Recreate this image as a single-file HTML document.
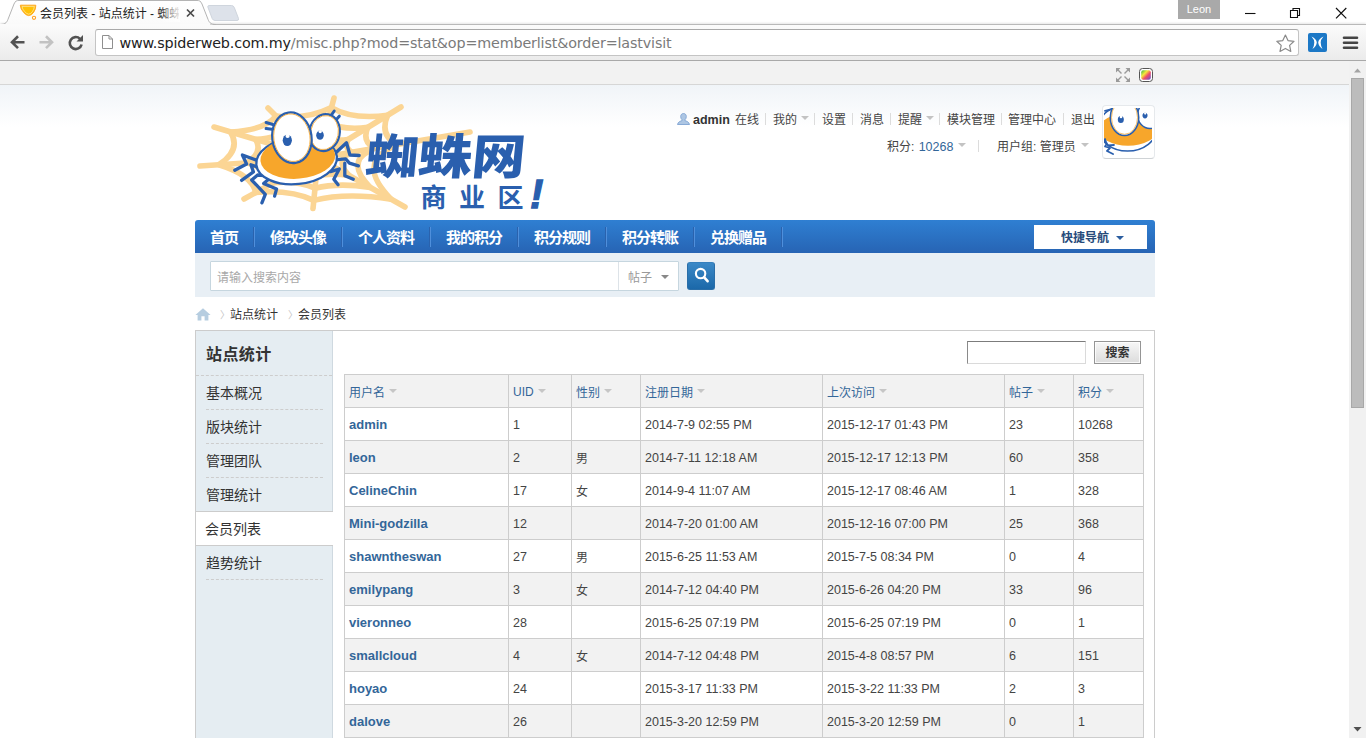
<!DOCTYPE html>
<html lang="zh-CN">
<head>
<meta charset="utf-8">
<title>会员列表 - 站点统计 - 蜘蛛网</title>
<style>
*{box-sizing:border-box;margin:0;padding:0}
html,body{width:1366px;height:738px;overflow:hidden;background:#fff}
body{font-family:"Liberation Sans","Noto Sans CJK SC",sans-serif;font-size:12px;color:#444;position:relative}
.abs{position:absolute}
/* ---------- browser chrome ---------- */
#chrome{position:absolute;left:0;top:0;width:1366px;height:85px;background:#fff;z-index:10}
#toolbar{position:absolute;left:0;top:24px;width:1366px;height:36px;background:linear-gradient(#fbfbfb,#ebebeb);border-top:1px solid #b9b9b9;box-shadow:0 -1px 2px rgba(0,0,0,0.10)}
#tbline{position:absolute;left:0;top:60px;width:1366px;height:1px;background:#a9a9a9}
#extbar{position:absolute;left:0;top:61px;width:1349px;height:24px;background:#f2f2f2;border-bottom:1px solid #d6d6d6}
#urlbox{position:absolute;left:95px;top:29px;width:1204px;height:27px;background:#fff;border:1px solid #c4c4c4;border-top-color:#a9a9a9;border-radius:3px}
#url{position:absolute;left:119.5px;top:33px;font-family:"DejaVu Sans","Liberation Sans",sans-serif;font-size:14.3px;line-height:20px;color:#222;white-space:nowrap;letter-spacing:-0.14px}
#url span{color:#7a7a7a}
#tabtitle{position:absolute;left:40px;top:4.5px;font-size:12px;line-height:18px;color:#222;font-family:"Liberation Sans","Noto Sans CJK SC",sans-serif;white-space:nowrap;width:139px;overflow:hidden}
#tfade{position:absolute;left:160px;top:4px;width:20px;height:18px;background:linear-gradient(90deg,rgba(254,254,254,0),rgba(254,254,254,0.95))}
#leon{position:absolute;left:1178px;top:0;width:42px;height:19px;background:#a9a9a9;color:#fff;font-size:11px;line-height:19px;text-align:center;font-family:"Liberation Sans",sans-serif}
/* ---------- scrollbar ---------- */
#sb{position:absolute;left:1349px;top:61px;width:17px;height:677px;background:#f1f1f1;z-index:11}
#sbthumb{position:absolute;left:2px;top:17px;width:13px;height:330px;background:#bcbcbc;border:1px solid #a8a8a8}
/* ---------- page ---------- */
#page{position:absolute;left:0;top:85px;width:1349px;height:653px;background:linear-gradient(#f0f4f8 0,#fff 42px,#fff 100%);overflow:hidden}
#wrap{position:absolute;left:195px;top:0;width:960px;height:653px}

/* header */
#um{position:absolute;left:0;top:0;width:960px;height:120px;font-size:12px;line-height:28px;color:#444;white-space:nowrap}
#um span{position:absolute}
#um .r1{top:21px}
#um .r2{top:48px}
#um .pipe{width:1px;height:12px;background:#dcdcdc;margin-top:7px;overflow:hidden}
#um .pipe.r2{margin-top:7px}
#um .arr{width:0;height:0;border-left:4px solid transparent;border-right:4px solid transparent;border-top:4px solid #c3c3c3;margin-top:10px}
#um b{color:#333;font-weight:bold;font-size:12.5px}
#avt{position:absolute;left:907px;top:20px;width:53px;height:54px;background:#fff;border-radius:4px;border:1px solid #e6e9ec;border-bottom-color:#cfd3d6;overflow:hidden}
#avt svg{position:absolute;left:1px;top:2px}
/* nav */
#nv{position:absolute;left:0;top:135px;width:960px;height:33px;background:linear-gradient(#2f7fd2,#2a6fc0 60%,#2764b4);border-radius:3px 3px 0 0;font-family:"Liberation Sans","Noto Sans CJK SC",serif;font-weight:700;font-size:15px;letter-spacing:-1px;line-height:35px;color:#fff;white-space:nowrap}
#nv a{position:absolute;top:0;height:33px;padding-left:15px;color:#fff}
#nv a i{position:absolute;right:0;top:7px;width:2px;height:20px;background:linear-gradient(90deg,#2a62ad 50%,#4f8fdb 50%)}
#qm{position:absolute;left:839px;top:5px;width:113px;height:24px;background:#fff;color:#264a7a;font-size:12px;letter-spacing:0;line-height:27px;text-align:left;padding-left:27px;font-weight:700}
#qm em{position:absolute;left:82px;top:11px;width:0;height:0;border-left:4px solid transparent;border-right:4px solid transparent;border-top:4px solid #2b5d9f}
/* search bar */
#scbar{position:absolute;left:0;top:168px;width:960px;height:44px;background:#e8eff5}
#scin{position:absolute;left:15px;top:8px;width:469px;height:30px;background:#fff;border:1px solid #c6d6df;border-radius:1px}
#scin .ph{position:absolute;left:6px;top:0;line-height:33px;color:#a8a8a8;font-size:12px}
#scin .ty{position:absolute;left:407px;top:0;width:1px;height:28px;background:#dde3e8}
#scin .tt{position:absolute;left:417px;top:0;line-height:33px;color:#999;font-size:12px}
#scin em{position:absolute;left:450px;top:13px;width:0;height:0;border-left:4px solid transparent;border-right:4px solid transparent;border-top:4px solid #888}
#scbtn{position:absolute;left:492px;top:9px;width:28px;height:28px;background:linear-gradient(#3b89c7,#1b68a9);border-radius:3px;border:1px solid #2a6ea8;border-top-color:#3680bd}
/* breadcrumb */
#pt{position:absolute;left:0;top:221px;height:18px;font-size:12px;line-height:18px;color:#333;white-space:nowrap}
#pt span{position:absolute;top:0}
#pt .gt{color:#c4c4c4;font-family:"Noto Sans CJK SC",sans-serif;font-size:10px;margin-top:-0.5px}
/* main */
#ct{position:absolute;left:0;top:245px;width:960px;height:500px;border:1px solid #ccc;background:#fff}
#appl{position:absolute;left:0;top:0;width:137px;height:500px;background:#e5edf2;border-right:1px solid #cfd9e0}
#appl h2{position:absolute;left:10px;top:13px;font-size:16px;line-height:22px;color:#333;font-weight:700;font-family:"Liberation Sans","Noto Sans CJK SC",sans-serif;letter-spacing:0.4px}
#appl .hl{position:absolute;left:0;top:44px;width:136px;height:0;border-top:1px dashed #cdcdcd}
#appl .it{position:absolute;left:10px;width:117px;height:34px;border-bottom:1px dashed #cdcdcd;font-size:14px;line-height:35px;color:#333;white-space:nowrap}
#appl .it.a{left:0;width:137px;padding-left:9px;background:#fff;border-top:1px solid #ccc;border-bottom:1px solid #ccc;height:35px;line-height:35px}
/* search in content */
#sin{position:absolute;left:771px;top:10px;width:119px;height:23px;border:1px solid #dadada;border-top-color:#7c7c7c;border-left-color:#8a8a8a;background:#fff}
#sbtn{position:absolute;left:898px;top:10px;width:47px;height:23px;border:1px solid #959595;background:linear-gradient(#f7f7f7,#dcdcdc);box-shadow:inset 0 0 0 1px rgba(255,255,255,0.8);font-size:12px;font-weight:700;color:#333;text-align:center;line-height:23px;font-family:"Liberation Sans","Noto Sans CJK SC",sans-serif}
/* table */
#tb{position:absolute;left:148px;top:43px;width:799px;border-collapse:collapse;table-layout:fixed;font-size:12px;color:#444}
#tb td,#tb th{height:33px;border:1px solid #cdcdcd;padding:2px 0 0 4px;text-align:left;font-weight:normal;white-space:nowrap;vertical-align:middle;line-height:16px}
#tb td{font-size:12.5px}
#tb td.c{font-size:12px}
#tb th{background:#f2f2f2;color:#369}
#tb th em{display:inline-block;width:0;height:0;border-left:4px solid transparent;border-right:4px solid transparent;border-top:4px solid #c6c6c6;margin-left:4px;vertical-align:4px}
#tb th.u em{vertical-align:3px}
#tb th,#tb td.c{padding-top:4px}
#tb th.u{padding-top:2px}
#tb tr.alt td{background:#f2f2f2}
#tb td b{color:#369;font-weight:bold;font-size:13px}

#logo{position:absolute;left:0;top:0;width:360px;height:135px}
#lt1{position:absolute;left:171px;top:38px;font-family:"Noto Sans CJK SC","WenQuanYi Zen Hei",sans-serif;font-weight:900;font-size:48px;line-height:60px;color:#2a5fae;white-space:nowrap;transform-origin:0 50%;transform:scaleX(1.11) skewX(-5deg)}
#lt2{position:absolute;left:225.5px;top:94px;font-family:"Noto Sans CJK SC","WenQuanYi Zen Hei",sans-serif;font-weight:700;font-size:26px;line-height:34px;color:#2a5fae;white-space:nowrap;letter-spacing:12.5px}
#lt3{position:absolute;left:335px;top:89px;font-family:"Liberation Sans",sans-serif;font-weight:bold;font-style:italic;font-size:40px;line-height:40px;color:#2a5fae;-webkit-text-stroke:1.3px #2a5fae}
</style>
</head>
<body>
<div id="chrome">
  <div id="toolbar"></div>
  <div id="tbline"></div>
  <div id="extbar"></div>
  <div id="urlbox"></div>
  <div id="url">www.spiderweb.com.my<span>/misc.php?mod=stat&amp;op=memberlist&amp;order=lastvisit</span></div>
  <svg id="chsvg" width="1366" height="85" viewBox="0 0 1366 85" style="position:absolute;left:0;top:0">
<defs>
<linearGradient id="tabg" x1="0" y1="0" x2="0" y2="1"><stop offset="0" stop-color="#ffffff"/><stop offset="1" stop-color="#fafafa"/></linearGradient>
<linearGradient id="rb" x1="0" y1="0" x2="1" y2="1"><stop offset="0" stop-color="#35b34a"/><stop offset="0.35" stop-color="#f5e83a"/><stop offset="0.6" stop-color="#ef4b6b"/><stop offset="1" stop-color="#5a55d6"/></linearGradient>
</defs>
<!-- new tab button -->
<path d="M208.7,5.5 L231.5,5.5 Q233.5,5.5 234.3,7.5 L238.5,18.5 Q239,20.5 237,20.5 L215,20.5 Q213,20.5 212.2,18.5 L208,7.5 Q207.5,5.5 208.7,5.5Z" fill="#dde2ea" stroke="#cfd5dd" stroke-width="1"/>
<!-- tab -->
<path d="M0,24.5 C6,24.5 7,22 8.5,18 L14,4 C15.3,1 16.5,0.5 19,0.5 L197,0.5 C199.5,0.5 200.7,1 202,4 L207.5,18 C209,22 210,24.5 216,24.5" fill="url(#tabg)" stroke="#b4b4b4" stroke-width="1"/>
<rect x="0" y="24" width="210" height="2" fill="#fbfbfb"/>
<!-- favicon -->
<g><path d="M20.3,5.2 L35.8,5.2 Q36,9 33.8,12 Q32,15.4 28.6,15.6 Q25.5,15.2 23.5,12.2 Q20.6,9.6 20.3,5.2Z" fill="#ffc107" stroke="#ffa726" stroke-width="1"/>
<path d="M22,6.4 L34.4,6.4 Q34,9.5 32.4,11.6 Q31,14 28.6,14.2 Q26.2,13.8 24.6,11.4 Q22.4,9.4 22,6.4Z" fill="none" stroke="#ffe9b0" stroke-width="0.7"/>
<circle cx="34" cy="17.8" r="1.6" fill="#fff" stroke="#ffa024" stroke-width="1.1"/></g>
<!-- tab close -->
<path d="M187,9.5 L194,16.5 M194,9.5 L187,16.5" stroke="#4a4a4a" stroke-width="1.7" fill="none"/>
<!-- window buttons -->
<path d="M1245,13.5 H1255.5" stroke="#111" stroke-width="1.1"/>
<path d="M1290.5,10.5 H1297.5 V17.5 H1290.5Z M1293,10.5 V8.5 H1299.5 V15.5 H1297.5" stroke="#111" stroke-width="1.1" fill="none"/>
<path d="M1336,8 L1346.3,18.3 M1346.3,8 L1336,18.3" stroke="#111" stroke-width="1.2" fill="none"/>
<!-- back / forward / reload -->
<path d="M24.5,42.2 H12.5 M18,36.3 L12,42.2 L18,48.1" stroke="#525252" stroke-width="2.6" fill="none" stroke-linejoin="miter"/>
<path d="M39.5,42.2 H51.5 M46,36.3 L52,42.2 L46,48.1" stroke="#c2c2c2" stroke-width="2.6" fill="none" stroke-linejoin="miter"/>
<path d="M80,38.8 A6,6 0 1 0 81.6,44.5" stroke="#525252" stroke-width="2.6" fill="none"/>
<path d="M76.5,41.5 H83 V35 Z" fill="#525252"/>
<!-- page icon -->
<path d="M102.5,35.5 H109 L112.5,39 V48.5 H102.5Z" fill="#fff" stroke="#8f8f8f" stroke-width="1"/>
<path d="M109,35.5 V39 H112.5" fill="none" stroke="#8f8f8f" stroke-width="1"/>
<!-- star -->
<path d="M1285.4,35 L1288,40.6 L1294,41.3 L1289.6,45.4 L1290.8,51.4 L1285.4,48.4 L1280,51.4 L1281.2,45.4 L1276.8,41.3 L1282.8,40.6Z" fill="#fff" stroke="#8a8a8a" stroke-width="1.2" stroke-linejoin="round"/>
<!-- blue ext icon -->
<rect x="1308" y="33" width="19" height="19" rx="2" fill="#1c78c6"/>
<path d="M1311.5,36.5 Q1316.5,39 1316.8,42.5 Q1316.5,46 1312.5,49 Q1314.3,45.5 1314.3,42.5 Q1314.3,39.5 1311.5,36.5Z M1323.5,36.5 Q1318.5,39 1318.2,42.5 Q1318.5,46 1322.5,49 Q1320.7,45.5 1320.7,42.5 Q1320.7,39.5 1323.5,36.5Z" fill="#fff"/>
<!-- hamburger -->
<path d="M1344,37.8 H1357 M1344,42.8 H1357 M1344,47.8 H1357" stroke="#454545" stroke-width="2.6" stroke-linecap="round"/>
<!-- ext bar icons -->
<g fill="#9a9a9a" stroke="#9a9a9a" stroke-width="1.4">
<path d="M1116,68 h4.5 l-4.5,4.5z M1130,68 h-4.5 l4.5,4.5z M1116,82 h4.5 l-4.5,-4.5z M1130,82 h-4.5 l4.5,-4.5z" stroke="none"/>
<path d="M1117.5,69.5 L1121.5,73.5 M1128.5,69.5 L1124.5,73.5 M1117.5,80.5 L1121.5,76.5 M1128.5,80.5 L1124.5,76.5" fill="none"/>
</g>
<rect x="1139.5" y="68.5" width="13" height="13" rx="3" fill="#fff" stroke="#555" stroke-width="1"/>
<rect x="1141.2" y="70.2" width="9.6" height="9.6" rx="2" fill="url(#rb)"/>
<!-- scrollbar arrows drawn in #sb -->
</svg>
  <div id="tabtitle">会员列表 - 站点统计 - 蜘蛛</div>
  <div id="tfade"></div>
  <div id="leon">Leon</div>
</div>
<div id="sb"><div id="sbthumb"></div><svg width="17" height="677" viewBox="0 0 17 677" style="position:absolute;left:0;top:0"><path d="M5,11.5 L8.5,7.5 L12,11.5Z" fill="#a3a3a3"/><path d="M4.5,666 L12.5,666 L8.5,670.5Z" fill="#505050"/></svg></div>
<div id="page">
  <div id="wrap">
<div id="logo"><!--LOGO--><svg width="360" height="135" viewBox="0 0 360 135" style="position:absolute;left:0;top:0"><g fill="none" stroke="#fbd594" stroke-width="5.6" stroke-linecap="round" stroke-linejoin="round"><line x1="123" y1="73" x2="19" y2="42"/><line x1="123" y1="73" x2="73" y2="23"/><line x1="123" y1="73" x2="139" y2="13"/><line x1="123" y1="73" x2="206" y2="22"/><line x1="123" y1="73" x2="275" y2="47"/><line x1="123" y1="73" x2="210" y2="122"/><line x1="123" y1="73" x2="118" y2="123.5"/><line x1="123" y1="73" x2="49" y2="114"/><line x1="123" y1="73" x2="5" y2="81"/><path d="M85.6,61.8 Q100.3,61.0 105.0,55.0 Q118.0,56.8 128.8,51.4 Q137.6,56.6 152.9,54.6 Q149.2,63.1 156.9,67.2 Q146.8,72.0 147.2,76.4 Q145.7,81.6 154.3,90.6 Q135.1,87.7 121.2,91.2 Q111.3,86.5 96.4,87.8 Q94.7,80.2 80.5,75.9 Q90.2,69.6 85.6,61.8Z"/><path d="M60.6,54.4 Q85.1,53.1 93.0,43.0 Q114.6,45.9 132.6,37.0 Q147.4,45.7 172.8,42.4 Q166.6,56.5 179.5,63.3 Q162.7,71.3 163.3,78.6 Q160.9,87.4 175.2,102.4 Q143.2,97.5 120.0,103.3 Q103.6,95.5 78.6,97.6 Q75.8,85.1 52.2,77.8 Q68.4,67.3 60.6,54.4Z"/><path d="M35.6,47.0 Q70.0,45.1 81.0,31.0 Q111.3,35.1 136.4,22.6 Q157.1,34.8 192.7,30.2 Q184.0,49.9 202.2,59.5 Q178.6,70.7 179.4,80.9 Q176.1,93.1 196.1,114.2 Q151.2,107.3 118.8,115.4 Q95.8,104.5 60.8,107.4 Q56.9,89.9 23.9,79.7 Q46.5,65.1 35.6,47.0Z"/></g>
<g fill="none" stroke="#2a5fae" stroke-width="3.3" stroke-linecap="round" stroke-linejoin="round"><path d="M65.2,76.4 L47.4,70.0 L51.6,79.0 L39.8,85.2"/><path d="M72.8,85.7 L55.9,79.8 L58.4,86.9 L46.6,95.4"/><path d="M83.0,91.7 L62.6,90.0 L56.7,95.0 L70.3,109.4 L66.9,117.9"/><path d="M86.4,95.4 L73.7,94.2 L68.6,98.4 L81.6,103.9 L79.6,111.1"/><path d="M140.5,68.0 L151.5,57.8 L154.9,70.0 L164.2,70.5"/><path d="M142.2,74.7 L150.7,73.9 L154.4,78.1 L163.4,80.8"/><path d="M149.8,78.1 L149.8,90.8 L158.3,94.2"/><path d="M135.5,86.6 L144.3,84.0 L138.8,94.2 L143.1,99.8"/></g>
<ellipse cx="101.6" cy="75.6" rx="40.5" ry="23.5" fill="#fff" stroke="#2a5fae" stroke-width="2.3" transform="rotate(-6 101.6 75.6)"/>
<ellipse cx="102.8" cy="72.7" rx="37.5" ry="21" fill="#f7a62b" transform="rotate(-5 102.8 72.7)"/>
<g fill="none" stroke="#2a5fae" stroke-width="3" stroke-linecap="round"><path d="M71.1,37.5 L77.9,39.5"/><path d="M71.1,43.6 L77.0,44.3"/><path d="M134.6,32.7 L139.2,26.0"/><path d="M140.2,35.8 L144.3,31.2"/></g>
<ellipse cx="129.5" cy="47.6" rx="15.2" ry="18.6" fill="#fff" stroke="#2a5fae" stroke-width="2.2" transform="rotate(12 129.5 47.6)"/>
<ellipse cx="129.5" cy="47.6" rx="13.8" ry="17.2" fill="none" stroke="#f7a62b" stroke-width="0.8" transform="rotate(12 129.5 47.6)"/>
<ellipse cx="96.9" cy="52.7" rx="19.6" ry="25.4" fill="#fff" stroke="#2a5fae" stroke-width="2.3" transform="rotate(-8 96.9 52.7)"/>
<ellipse cx="96.9" cy="52.7" rx="18.1" ry="23.9" fill="none" stroke="#f7a62b" stroke-width="0.8" transform="rotate(-8 96.9 52.7)"/>
<ellipse cx="92.3" cy="55.3" rx="4.6" ry="5.8" fill="#2a5fae"/><circle cx="92.6" cy="50.9" r="2.1" fill="#fff"/>
<ellipse cx="125.0" cy="50.2" rx="3.8" ry="4.6" fill="#2a5fae"/><circle cx="125.2" cy="46.6" r="1.7" fill="#fff"/></svg><!--/LOGO--><div id="lt1">蜘蛛网</div><div id="lt2">商业区</div><div id="lt3">!</div></div>
<div id="um">
 <span class="r1" id="uico" style="left:482px;width:13px;height:28px"><svg width="13" height="12" viewBox="0 0 13 12" style="position:absolute;left:0;top:7px"><path d="M6.5,0.5 C8.3,0.5 9.3,1.8 9.3,3.6 C9.3,5 8.7,6.2 7.9,6.8 L7.9,7.6 C10,8.3 12,9 12.5,11.5 L0.5,11.5 C1,9 3,8.3 5.1,7.6 L5.1,6.8 C4.3,6.2 3.7,5 3.7,3.6 C3.7,1.8 4.7,0.5 6.5,0.5Z" fill="#adc6e3" stroke="#7fa4d3" stroke-width="0.9"/></svg></span>
 <span class="r1" style="left:498px"><b>admin</b></span>
 <span class="r1" style="left:540px">在线</span>
 <span class="r1 pipe" style="left:570px"></span>
 <span class="r1" style="left:578px">我的</span><span class="r1 arr" style="left:606px"></span>
 <span class="r1 pipe" style="left:619px"></span>
 <span class="r1" style="left:627px">设置</span>
 <span class="r1 pipe" style="left:657px"></span>
 <span class="r1" style="left:665px">消息</span>
 <span class="r1 pipe" style="left:695px"></span>
 <span class="r1" style="left:703px">提醒</span><span class="r1 arr" style="left:731px"></span>
 <span class="r1 pipe" style="left:744px"></span>
 <span class="r1" style="left:752px">模块管理</span>
 <span class="r1 pipe" style="left:806px"></span>
 <span class="r1" style="left:813px">管理中心</span>
 <span class="r1 pipe" style="left:868px"></span>
 <span class="r1" style="left:876px">退出</span>
 <span class="r2" style="left:692px">积分: <a style="color:#369;font-size:12.5px;margin-left:1px">10268</a></span><span class="r2 arr" style="left:763px"></span>
 <span class="r2 pipe" style="left:783px"></span>
 <span class="r2" style="left:802px">用户组: 管理员</span><span class="r2 arr" style="left:886px"></span>
</div>
<div id="avt"><svg width="48" height="48" viewBox="0 0 48 48"><rect width="48" height="48" fill="#fff"/>
<ellipse cx="23.6" cy="20" rx="29.3" ry="23" fill="#fff" stroke="#2a5fae" stroke-width="1.6"/>
<ellipse cx="24" cy="21.5" rx="29" ry="16.3" fill="#f7a62b"/>
<ellipse cx="46" cy="7" rx="12.5" ry="13.5" fill="#fff" stroke="#2a5fae" stroke-width="1.5"/>
<ellipse cx="20.5" cy="9.5" rx="14.2" ry="18" fill="#fff" stroke="#2a5fae" stroke-width="1.6"/>
<ellipse cx="20.5" cy="9.5" rx="13" ry="16.8" fill="none" stroke="#f7a62b" stroke-width="0.7"/>
<ellipse cx="16.8" cy="11.5" rx="3" ry="3.6" fill="#2a5fae"/><circle cx="17" cy="9" r="1.3" fill="#fff"/>
<ellipse cx="41" cy="7.6" rx="2.5" ry="2.8" fill="#2a5fae"/><circle cx="41.2" cy="5.6" r="1.1" fill="#fff"/>
<path d="M1,2.8 L6,1.6 M0,32 L3,35.5 L1,38.5 L6,40 L3,43 L9,46 M4,37.5 L10,37 M2,34 L1,31" fill="none" stroke="#2a5fae" stroke-width="1.8" stroke-linecap="round" stroke-linejoin="round"/>
</svg></div>
<div id="nv"><a style="left:0px;width:60px">首页<i></i></a><a style="left:60px;width:88px">修改头像<i></i></a><a style="left:148px;width:88px">个人资料<i></i></a><a style="left:236px;width:88px">我的积分<i></i></a><a style="left:324px;width:88px">积分规则<i></i></a><a style="left:412px;width:88px">积分转账<i></i></a><a style="left:500px;width:88px">兑换赠品<i></i></a><div id="qm">快捷导航<em></em></div></div>
<div id="scbar">
 <div id="scin"><span class="ph">请输入搜索内容</span><span class="ty"></span><span class="tt">帖子</span><em></em></div>
 <div id="scbtn"><svg width="26" height="27" viewBox="0 0 26 27" style="position:absolute;left:0;top:-0.7px"><circle cx="12.6" cy="11.6" r="4.7" fill="none" stroke="#fff" stroke-width="2.1"/><path d="M16.2,15.3 L19.6,19.2" stroke="#fff" stroke-width="2.6" stroke-linecap="round"/></svg></div>
</div>
<div id="pt">
 <span id="home" style="left:0px;width:16px;height:18px"><svg width="16" height="13" viewBox="0 0 16 13" style="position:absolute;left:0;top:1.5px"><path d="M8,0.3 L15.6,7 L13.4,7 L13.4,12.5 L9.6,12.5 L9.6,8.2 L6.4,8.2 L6.4,12.5 L2.6,12.5 L2.6,7 L0.4,7Z" fill="#b6cde0"/></svg></span>
 <span class="gt" style="left:25px">〉</span>
 <span style="left:35px">站点统计</span>
 <span class="gt" style="left:93px">〉</span>
 <span style="left:103px">会员列表</span>
</div>
<div id="ct">
 <div id="appl"><h2>站点统计</h2><div class="hl"></div><div class="it" style="top:45px">基本概况</div><div class="it" style="top:79px">版块统计</div><div class="it" style="top:113px">管理团队</div><div class="it" style="top:147px">管理统计</div><div class="it a" style="top:180px">会员列表</div><div class="it" style="top:215px">趋势统计</div></div>
 <div id="sin"></div><div id="sbtn">搜索</div>
 <table id="tb"><colgroup><col style="width:164px"><col style="width:63px"><col style="width:69px"><col style="width:182px"><col style="width:182px"><col style="width:69px"><col style="width:70px"></colgroup>
 <tr><th>用户名<em></em></th><th class="u">UID<em></em></th><th>性别<em></em></th><th>注册日期<em></em></th><th>上次访问<em></em></th><th>帖子<em></em></th><th>积分<em></em></th></tr>
 <tr><td><b>admin</b></td><td>1</td><td></td><td>2014-7-9 02:55 PM</td><td>2015-12-17 01:43 PM</td><td>23</td><td>10268</td></tr>
<tr class="alt"><td><b>leon</b></td><td>2</td><td class="c">男</td><td>2014-7-11 12:18 AM</td><td>2015-12-17 12:13 PM</td><td>60</td><td>358</td></tr>
<tr><td><b>CelineChin</b></td><td>17</td><td class="c">女</td><td>2014-9-4 11:07 AM</td><td>2015-12-17 08:46 AM</td><td>1</td><td>328</td></tr>
<tr class="alt"><td><b>Mini-godzilla</b></td><td>12</td><td></td><td>2014-7-20 01:00 AM</td><td>2015-12-16 07:00 PM</td><td>25</td><td>368</td></tr>
<tr><td><b>shawntheswan</b></td><td>27</td><td class="c">男</td><td>2015-6-25 11:53 AM</td><td>2015-7-5 08:34 PM</td><td>0</td><td>4</td></tr>
<tr class="alt"><td><b>emilypang</b></td><td>3</td><td class="c">女</td><td>2014-7-12 04:40 PM</td><td>2015-6-26 04:20 PM</td><td>33</td><td>96</td></tr>
<tr><td><b>vieronneo</b></td><td>28</td><td></td><td>2015-6-25 07:19 PM</td><td>2015-6-25 07:19 PM</td><td>0</td><td>1</td></tr>
<tr class="alt"><td><b>smallcloud</b></td><td>4</td><td class="c">女</td><td>2014-7-12 04:48 PM</td><td>2015-4-8 08:57 PM</td><td>6</td><td>151</td></tr>
<tr><td><b>hoyao</b></td><td>24</td><td></td><td>2015-3-17 11:33 PM</td><td>2015-3-22 11:33 PM</td><td>2</td><td>3</td></tr>
<tr class="alt"><td><b>dalove</b></td><td>26</td><td></td><td>2015-3-20 12:59 PM</td><td>2015-3-20 12:59 PM</td><td>0</td><td>1</td></tr>
</table>
</div>
</div>
</div>
</body>
</html>
